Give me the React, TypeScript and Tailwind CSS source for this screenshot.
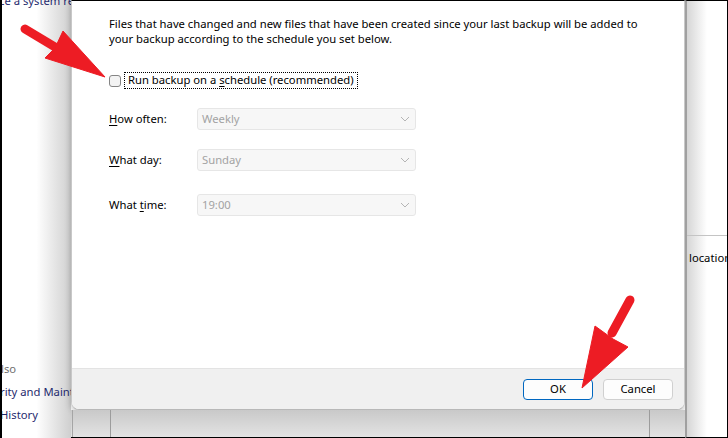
import React from 'react';

const font = { fontFamily: '"Noto Sans", "Open Sans", sans-serif' };

function Chevron() {
  return (
    <svg width="10" height="6" viewBox="0 0 10 6" className="text-[#b5b5b5]">
      <path d="M1 1 L5 5 L9 1" fill="none" stroke="currentColor" strokeWidth="1" />
    </svg>
  );
}

function Field({ ul, rest, pre, value }: { pre?: string; ul: string; rest: string; value: string }) {
  return (
    <div className="flex items-center h-[22px]">
      <div className="w-[88px] text-[11.25px] text-black">
        {pre}
        <span className="underline underline-offset-2">{ul}</span>
        {rest}
      </div>
      <div className="w-[219px] h-[22px] flex items-center justify-between pl-[4px] pr-[5px] bg-[#f7f7f7] border border-[#e6e6e6] rounded-[3px]">
        <span className="text-[11.25px] text-[#a3a3a3]">{value}</span>
        <Chevron />
      </div>
    </div>
  );
}

function Arrows() {
  return (
    <svg className="absolute inset-0 pointer-events-none" width="728" height="438" viewBox="0 0 728 438">
      <g fill="#ed1c24" stroke="#ed1c24">
        <line x1="25" y1="29" x2="60" y2="50" strokeWidth="9" strokeLinecap="round" />
        <polygon points="63,31 105,77 45,58 55,48" strokeWidth="1" strokeLinejoin="round" />
        <line x1="630" y1="300" x2="612" y2="333" strokeWidth="9" strokeLinecap="round" />
        <polygon points="595,326 582,388 628,347 613,339" strokeWidth="1" strokeLinejoin="round" />
      </g>
    </svg>
  );
}

export default function App() {
  return (
    <div className="relative w-[728px] h-[438px] overflow-hidden bg-white flex" style={font}>
      {/* left background window */}
      <div className="w-[71px] shrink-0 h-full flex flex-col justify-between overflow-hidden bg-gradient-to-r from-white via-white to-[#cfcfcf] border-l-2 border-black">
        <div className="mt-[-7px] text-[11.25px] text-[#1f2a6e] whitespace-nowrap -ml-[3px]">ce a system re</div>
        <div className="flex flex-col text-[11.25px] whitespace-nowrap leading-[23px] mb-[12px]">
          <span className="text-[#707070] -ml-[1px]">lso</span>
          <span className="text-[#1f2a6e] -ml-[2px]">rity and Maint</span>
          <span className="text-[#1f2a6e] -ml-[2px]">History</span>
        </div>
      </div>

      {/* dialog column */}
      <div className="w-[614px] shrink-0 h-full flex flex-col">
        <div className="h-[410px] flex flex-col bg-white rounded-b-[8px] border-t border-black border-b border-x border-b-[#b8b8b8] border-x-[#c8c8c8] shadow-[0_2px_6px_rgba(0,0,0,0.25)] overflow-hidden">
          <div className="flex-1 pl-[37px] pt-[15px]">
            <p className="text-[11.25px] leading-[15px] text-black whitespace-nowrap">
              Files that have changed and new files that have been created since your last backup will be added to
              <br />
              your backup according to the schedule you set below.
            </p>
            <div className="flex items-center mt-[26px] h-[17px]">
              <div className="w-[12px] h-[12px] rounded-[3px] border border-[#858585] bg-[#f3f3f3]" />
              <div className="ml-[3px] border border-dotted border-black px-[3px] h-[17px] flex items-center text-[11.25px] text-black">
                Run backup on a&nbsp;<span className="underline underline-offset-2">s</span>chedule (recommended)
              </div>
            </div>
            <div className="flex flex-col mt-[19px] gap-[19px]">
              <Field ul="H" rest="ow often:" value="Weekly" />
              <Field ul="W" rest="hat day:" value="Sunday" />
              <div className="mt-[4px]">
                <Field pre="What " ul="t" rest="ime:" value="19:00" />
              </div>
            </div>
          </div>
          <div className="h-[41px] bg-[#f0f0f0] border-t border-[#e3e3e3] flex items-center justify-end gap-[10px] pr-[11px]">
            <button className="w-[70px] h-[21px] rounded-[4px] bg-[#fdfdfd] border border-[#0067c0] text-[11.25px] text-black">OK</button>
            <button className="w-[70px] h-[21px] rounded-[4px] bg-[#fdfdfd] border border-[#d0d0d0] text-[11.25px] text-black">Cancel</button>
          </div>
        </div>
        <div className="flex-1 flex bg-gradient-to-b from-[#c9c9c9] to-[#e3e3e3] border-b border-black">
          <div className="w-[1px] ml-[1px] bg-[#a5a5a5]" />
          <div className="w-[1px] ml-[37px] bg-[#9c9c9c]" />
          <div className="w-[1px] ml-[538px] bg-[#9c9c9c]" />
        </div>
      </div>

      {/* right background window */}
      <div className="flex-1 min-w-0 overflow-hidden h-full flex flex-col border-l-2 border-[#a0a0a0] border-r border-r-black border-y border-y-black bg-gradient-to-r from-[#d6d6d6] via-white to-white">
        <div className="h-[235px] shrink-0 border-b border-[#c4c4c4]" />
        <div className="mt-[14px] ml-[2px] text-[11.25px] text-black whitespace-nowrap">location</div>
      </div>

      <Arrows />
    </div>
  );
}
